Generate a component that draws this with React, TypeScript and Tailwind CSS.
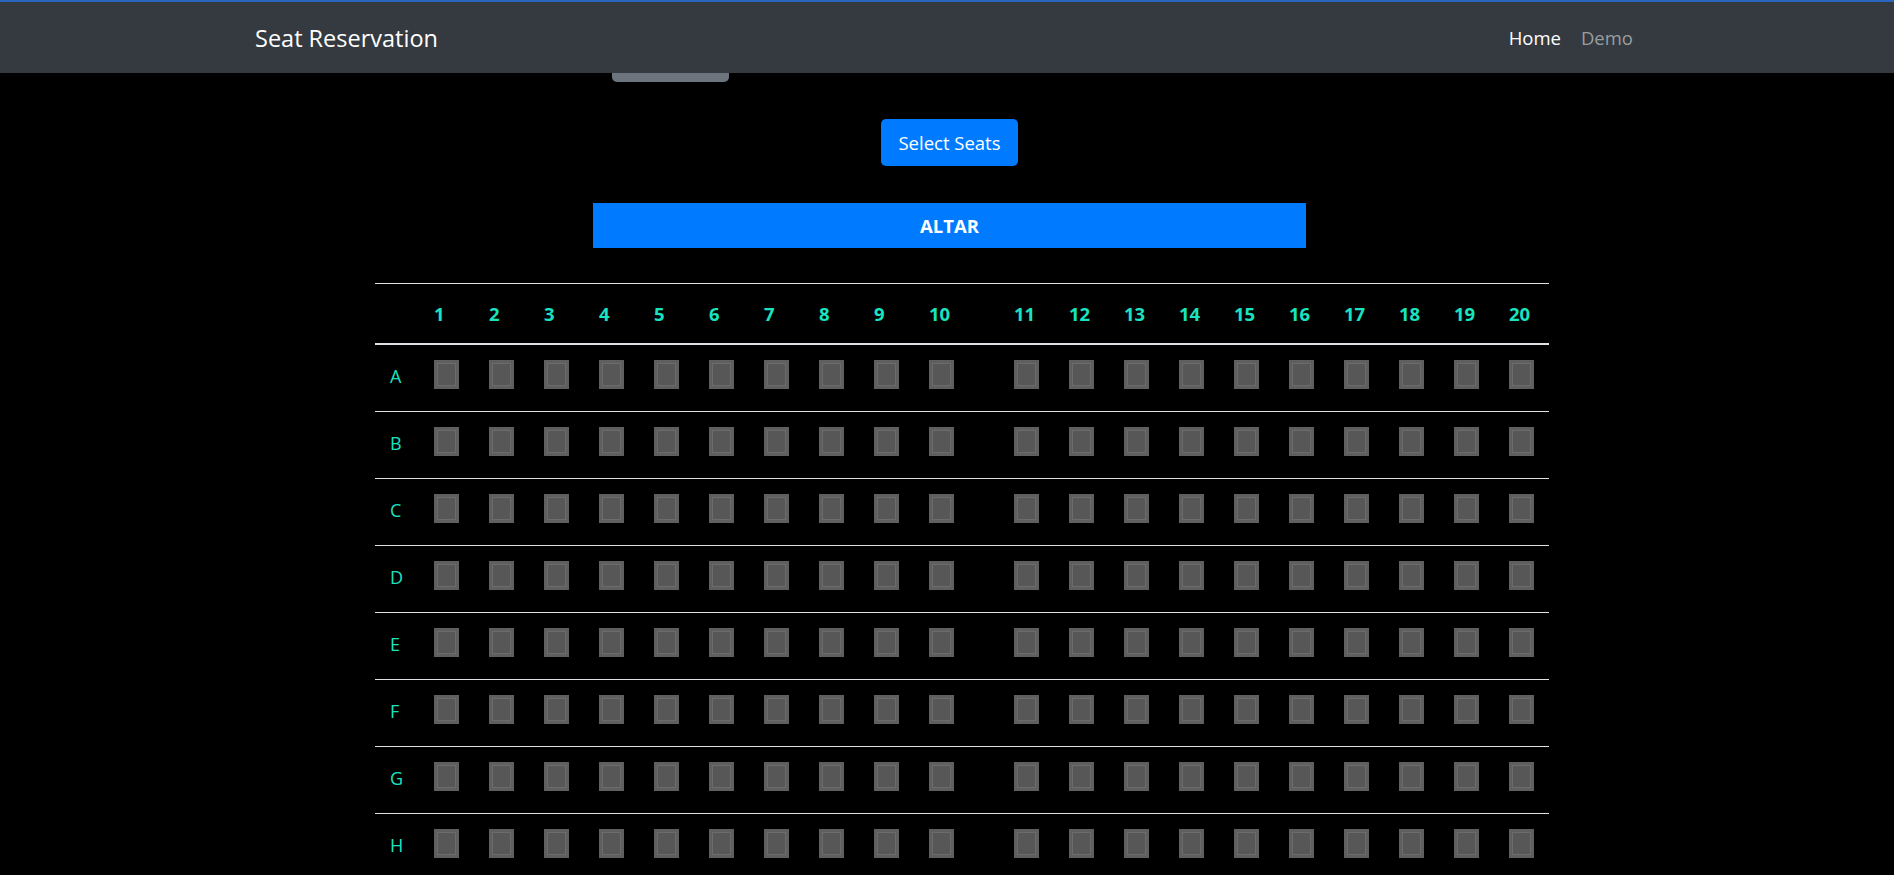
import React from "react";

const rows = ["A", "B", "C", "D", "E", "F", "G", "H"];
const left = Array.from({ length: 10 }, (_, i) => i + 1);
const right = Array.from({ length: 10 }, (_, i) => i + 11);

function Seat() {
  return (
    <div className="w-[25px] h-[29px] bg-[#5f5f5f] p-[3px]">
      <div className="w-full h-full border border-[#6c6c6c] bg-[#575757]" />
    </div>
  );
}

export default function App() {
  const font = { fontFamily: '"Open Sans", "Noto Sans", sans-serif' };
  return (
    <div className="min-h-screen bg-black text-white" style={font}>
      <nav className="h-[73px] bg-[#343a40] border-t-2 border-[#2a66c0] flex items-center pl-[255px] pr-[261px] pt-[2px]">
        <span className="text-[23.5px] text-white leading-none">Seat Reservation</span>
        <div className="ml-auto flex items-center gap-[20px] text-[18.5px] leading-none">
          <span className="text-white">Home</span>
          <span className="text-[#9a9da0]">Demo</span>
        </div>
      </nav>
      <div className="ml-[612px] w-[117px] h-[9px] bg-[#6c757d] rounded-b-[5px]" />
      <div className="mt-[37px] ml-[881px] w-[137px] h-[47px] bg-[#007bff] rounded-[5px] flex items-center justify-center text-[18.5px] text-white">
        Select Seats
      </div>
      <div className="mt-[37px] ml-[593px] w-[713px] h-[45px] bg-[#007bff] flex items-center justify-center text-[18.5px] font-bold text-white">
        ALTAR
      </div>
      <div className="mt-[35px] ml-[375px] w-[1174px] border-t border-[#dee2e6]">
        <div className="flex h-[61px] items-center border-b-2 border-[#dee2e6] text-[#19e3c1] font-bold text-[18.5px]">
          <div className="w-[44px]" />
          {left.map((n) => (
            <div key={n} className="w-[55px] pl-[15px]">{n}</div>
          ))}
          <div className="w-[30px]" />
          {right.map((n) => (
            <div key={n} className="w-[55px] pl-[15px]">{n}</div>
          ))}
        </div>
        {rows.map((r) => (
          <div key={r} className="flex h-[67px] border-b border-[#dee2e6]">
            <div className="w-[44px] pl-[15px] pt-[19px] text-[18px] leading-[24px] text-[#19e3c1]">{r}</div>
            {left.map((n) => (
              <div key={n} className="w-[55px] pl-[15px] pt-[15px]"><Seat /></div>
            ))}
            <div className="w-[30px]" />
            {right.map((n) => (
              <div key={n} className="w-[55px] pl-[15px] pt-[15px]"><Seat /></div>
            ))}
          </div>
        ))}
      </div>
    </div>
  );
}
